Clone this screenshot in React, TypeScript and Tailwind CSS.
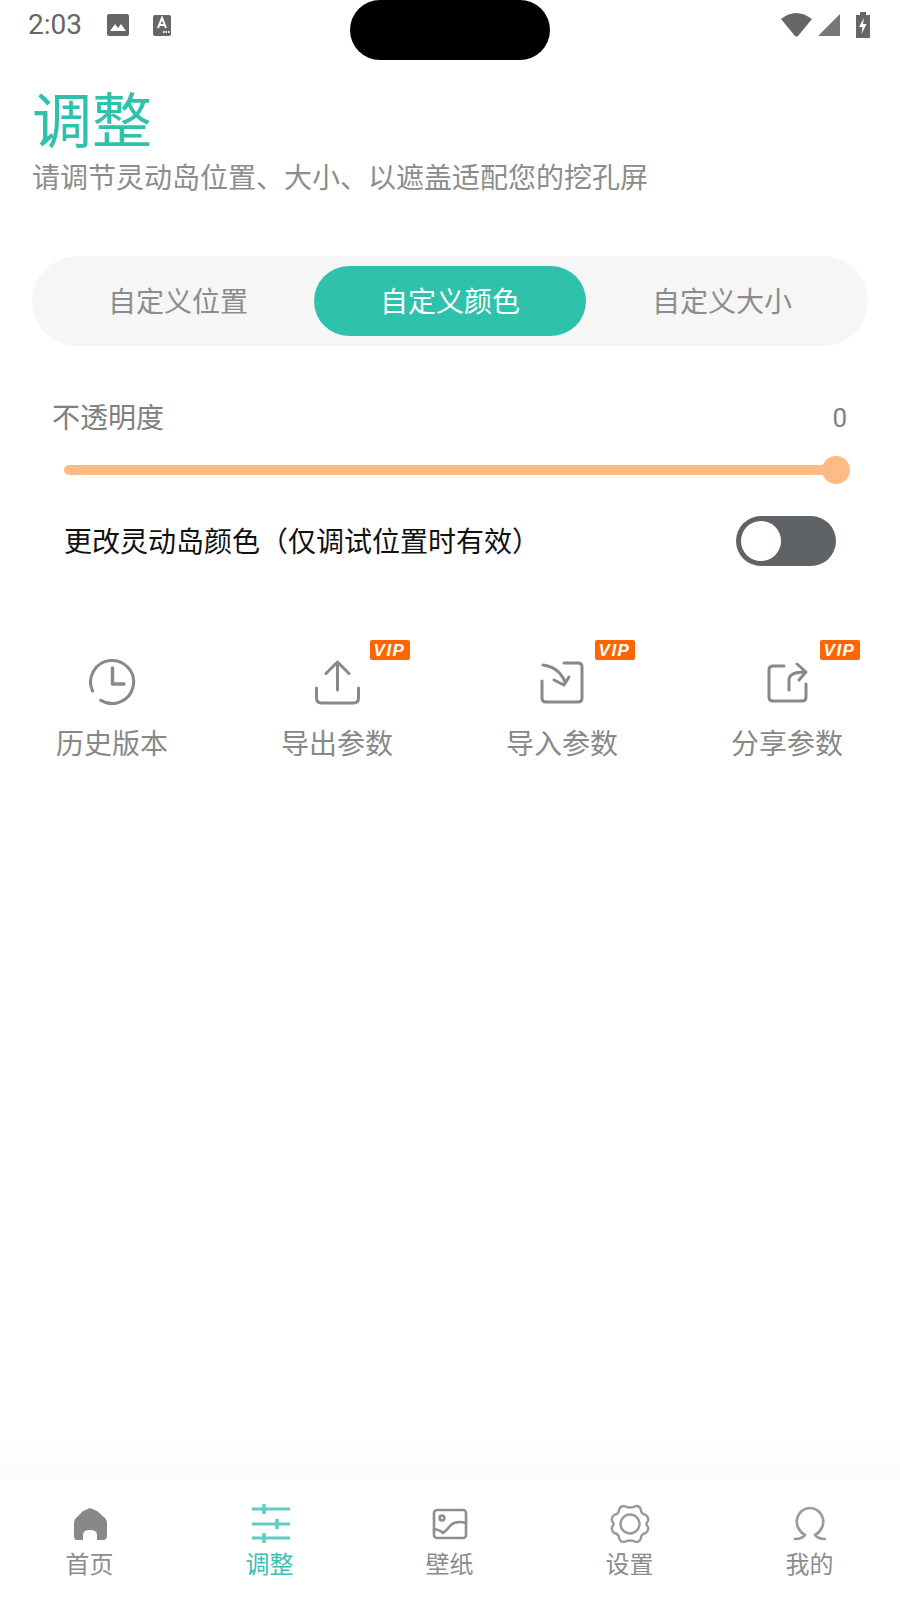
import React from 'react';

const cjk = { fontFamily: '"Noto Sans CJK SC", sans-serif' };

const ClockIcon = () => (
  <svg width="48" height="48" viewBox="0 0 48 48" fill="none" stroke="#888888" strokeWidth="3" strokeLinecap="round" strokeLinejoin="round">
    <path d="M3.600 33 A21.5 21.5 0 1 1 11.700 42.200" />
    <path d="M23.500 10 V26 H35" strokeWidth="3.4" />
  </svg>
);

const ExportIcon = () => (
  <svg width="48" height="48" viewBox="0 0 48 48" fill="none" stroke="#888888" strokeWidth="3" strokeLinecap="round" strokeLinejoin="round">
    <path d="M23.500 32 V4 M12 15.500 L23.500 4 L35 15.500" />
    <path d="M2.500 30 V40 Q2.500 45 7.500 45 H39.500 Q44.500 45 44.500 40 V30" />
  </svg>
);

const ImportIcon = () => (
  <svg width="48" height="48" viewBox="0 0 48 48" fill="none" stroke="#888888" strokeWidth="3" strokeLinecap="round" strokeLinejoin="round">
    <path d="M25 5 H39 Q43 5 43 9 V40 Q43 44 39 44 H7 Q3 44 3 40 V23" />
    <path d="M4 7 Q20 9 26 24 M15 22 L25 27 L30 19" />
  </svg>
);

const ShareIcon = () => (
  <svg width="48" height="48" viewBox="0 0 48 48" fill="none" stroke="#888888" strokeWidth="3" strokeLinecap="round" strokeLinejoin="round">
    <path d="M20 8 H9 Q5 8 5 12 V39 Q5 43 9 43 H38 Q42 43 42 39 V26" />
    <path d="M25 32 V22 Q25 14 41 14 M33 6 L42 14 L35 22" />
  </svg>
);

const VipBadge = () => (
  <span className="absolute left-[56px] top-[-18px] flex h-[20px] w-[40px] items-center justify-center rounded-[2px] bg-[#ff6600] text-[17px] font-bold italic leading-none tracking-[1.5px] text-white" style={{ fontFamily: '"Liberation Sans", sans-serif' }}>
    VIP
  </span>
);

const HomeIcon = () => (
  <svg width="36" height="36" viewBox="0 0 36 36" fill="#888888">
    <path d="M18 2 L25 5 L33 12 Q35 14 35 17 V30 Q35 34 31 34 H25 V29 Q25 24 18 24 Q11 24 11 29 V34 H5 Q2 34 2 30 V17 Q2 14 4 12 L11 5 Z" />
  </svg>
);

const SlidersIcon = () => (
  <svg width="40" height="40" viewBox="0 0 40 40" fill="none" stroke="#62cbc3" strokeWidth="3">
    <path d="M2 5 H40 M2 20 H40 M2 34 H40" />
    <path d="M14 0 V10 M27 15 V25 M14 29 V39" strokeWidth="3.5" />
  </svg>
);

const WallpaperIcon = () => (
  <svg width="36" height="36" viewBox="0 0 36 36" fill="none" stroke="#8e8e8e" strokeWidth="2.6" strokeLinejoin="round" strokeLinecap="round">
    <rect x="2" y="4" width="32" height="28" rx="3" />
    <circle cx="10" cy="12" r="2.4" />
    <path d="M2 23 Q8 24 11 27 Q15 24 18 20 Q23 14 34 17" />
  </svg>
);

const GearIcon = () => (
  <svg width="40" height="40" viewBox="0 0 40 40" fill="none" stroke="#999999" strokeWidth="2.4" strokeLinejoin="round">
    <path d="M14 2 Q20 5 26 2 Q30 2 31 6 Q31 10 36 11 Q39 14 38 17 Q35 20 38 23 Q39 26 36 29 Q31 30 31 34 Q30 38 26 38 Q20 35 14 38 Q10 38 9 34 Q9 30 4 29 Q1 26 2 23 Q5 20 2 17 Q1 14 4 11 Q9 10 9 6 Q10 2 14 2 Z" />
    <circle cx="20" cy="20" r="9.500" />
  </svg>
);

const MineIcon = () => (
  <svg width="34" height="36" viewBox="0 0 34 36" fill="none" stroke="#999999" strokeWidth="2.6" strokeLinecap="round" strokeLinejoin="round">
    <path d="M2 33 Q9 33 12 29 C5 25 3 18 4 13 C6 5 12 2 17 2 C22 2 28 5 30 13 C31 18 29 25 22 29 Q25 33 32 33" />
  </svg>
);

const actions = [
  { label: '历史版本', icon: <ClockIcon />, vip: false },
  { label: '导出参数', icon: <ExportIcon />, vip: true },
  { label: '导入参数', icon: <ImportIcon />, vip: true },
  { label: '分享参数', icon: <ShareIcon />, vip: true },
];

const tabs = [
  { label: '首页', icon: <HomeIcon /> },
  { label: '调整', icon: <SlidersIcon />, active: true },
  { label: '壁纸', icon: <WallpaperIcon /> },
  { label: '设置', icon: <GearIcon /> },
  { label: '我的', icon: <MineIcon /> },
];

export default function App() {
  return (
    <div className="relative flex h-[1600px] w-[900px] flex-col overflow-hidden bg-white" style={cjk}>
      {/* Status bar */}
      <div className="flex h-[50px] items-center justify-between pl-[28px] pr-[30px]">
        <div className="flex items-center">
          <span className="text-[28px] leading-none text-[#666666]" style={{ fontFamily: 'Roboto, sans-serif' }}>2:03</span>
          <svg className="ml-[24px]" width="24" height="24" viewBox="0 0 24 24">
            <rect x="1" y="1" width="22" height="22" rx="2" fill="#666666" />
            <path d="M4 18 L9 11 L12 15 L15 11 L20 18 Z" fill="#ffffff" />
          </svg>
          <svg className="ml-[22px]" width="20" height="22" viewBox="0 0 20 22">
            <rect x="1" y="1" width="18" height="21" rx="2" fill="#666666" />
            <path d="M6 14 L10 4 L14 14 M7.500 11 H12.500" stroke="#ffffff" strokeWidth="2" fill="none" />
            <path d="M11 18 H18" stroke="#ffffff" strokeWidth="2" strokeDasharray="1.5 1" />
          </svg>
        </div>
        <div className="flex items-center">
          <svg className="mt-[-1px]" width="31" height="25" viewBox="0 0 31 25">
            <path d="M0 7 Q15 -5 31 7 L17 24 Q15.500 25 14 24 Z" fill="#666666" />
          </svg>
          <svg className="ml-[6px]" width="22" height="22" viewBox="0 0 22 22">
            <path d="M0 22 L22 0 V22 Z" fill="#777777" />
          </svg>
          <svg className="ml-[16px]" width="14" height="26" viewBox="0 0 14 26">
            <path d="M4 0 H10 V3 H14 V26 H0 V3 H4 Z" fill="#666666" />
            <path d="M8 6 L3 15 H6.500 L5.500 22 L10.500 12 H7 Z" fill="#ffffff" />
          </svg>
        </div>
      </div>
      <div className="absolute left-[350px] top-0 h-[60px] w-[200px] rounded-[30px] bg-black" />

      {/* Heading */}
      <h1 className="ml-[32px] mt-[35px] text-[60px] font-normal leading-[64px] text-[#2ec1ab]">调整</h1>
      <p className="ml-[32px] mt-[9px] text-[28px] leading-[36px] text-[#8c8c8c]">请调节灵动岛位置、大小、以遮盖适配您的挖孔屏</p>

      {/* Segmented tabs */}
      <div className="mx-[32px] mt-[62px] flex h-[90px] items-center rounded-[45px] bg-[#f6f6f6] px-[10px]">
        <div className="flex h-[70px] flex-1 items-center justify-center pb-[2px] text-[28px] text-[#8c8c8c]">自定义位置</div>
        <div className="flex h-[70px] w-[272px] items-center justify-center rounded-[35px] bg-[#2ec1ab] pb-[2px] text-[28px] text-white">自定义颜色</div>
        <div className="flex h-[70px] flex-1 items-center justify-center pb-[2px] text-[28px] text-[#8c8c8c]">自定义大小</div>
      </div>

      {/* Opacity slider */}
      <div className="ml-[52px] mr-[53px] mt-[51px] flex h-[40px] items-center justify-between">
        <span className="pb-[2px] text-[28px] text-[#808080]">不透明度</span>
        <span className="pt-[2px] text-[26px] text-[#808080]" style={{ fontFamily: 'Roboto, sans-serif' }}>0</span>
      </div>
      <div className="ml-[64px] mr-[50px] mt-[19px] flex h-[28px] items-center">
        <div className="h-[10px] flex-1 rounded-l-[5px] bg-[#ffbb85]" />
        <div className="ml-[-4px] h-[28px] w-[28px] rounded-full bg-[#ffbb85]" />
      </div>

      {/* Colour toggle */}
      <div className="ml-[64px] mr-[64px] mt-[32px] flex h-[50px] items-center justify-between">
        <span className="pb-[2px] text-[28px] text-[#111111]">更改灵动岛颜色（仅调试位置时有效）</span>
        <div className="flex h-[50px] w-[100px] items-center rounded-full bg-[#5f6368] pl-[5px]">
          <div className="h-[40px] w-[40px] rounded-full bg-white" />
        </div>
      </div>

      {/* Actions */}
      <div className="mt-[92px] grid grid-cols-4">
        {actions.map((a) => (
          <div key={a.label} className="flex flex-col items-center">
            <div className="relative flex h-[48px] w-[48px] items-center justify-center">
              {a.icon}
              {a.vip && <VipBadge />}
            </div>
            <span className="mt-[16px] pr-[1px] text-[28px] leading-[40px] text-[#888888]">{a.label}</span>
          </div>
        ))}
      </div>

      {/* Bottom navigation */}
      <div className="mt-auto">
        <div className="h-[40px] bg-linear-to-b from-white to-[#fafafa]" />
        <div className="h-[120px] bg-white">
          <div className="grid h-full grid-cols-5">
            {tabs.map((t) => (
              <div key={t.label} className="flex flex-col items-center pt-[24px]">
                <div className="flex h-[40px] items-center justify-center">{t.icon}</div>
                <span className={`mt-[4px] pr-[1px] text-[24px] leading-[30px] ${t.active ? 'text-[#3dbdb5]' : 'text-[#8c8c8c]'}`}>{t.label}</span>
              </div>
            ))}
          </div>
        </div>
      </div>
    </div>
  );
}
